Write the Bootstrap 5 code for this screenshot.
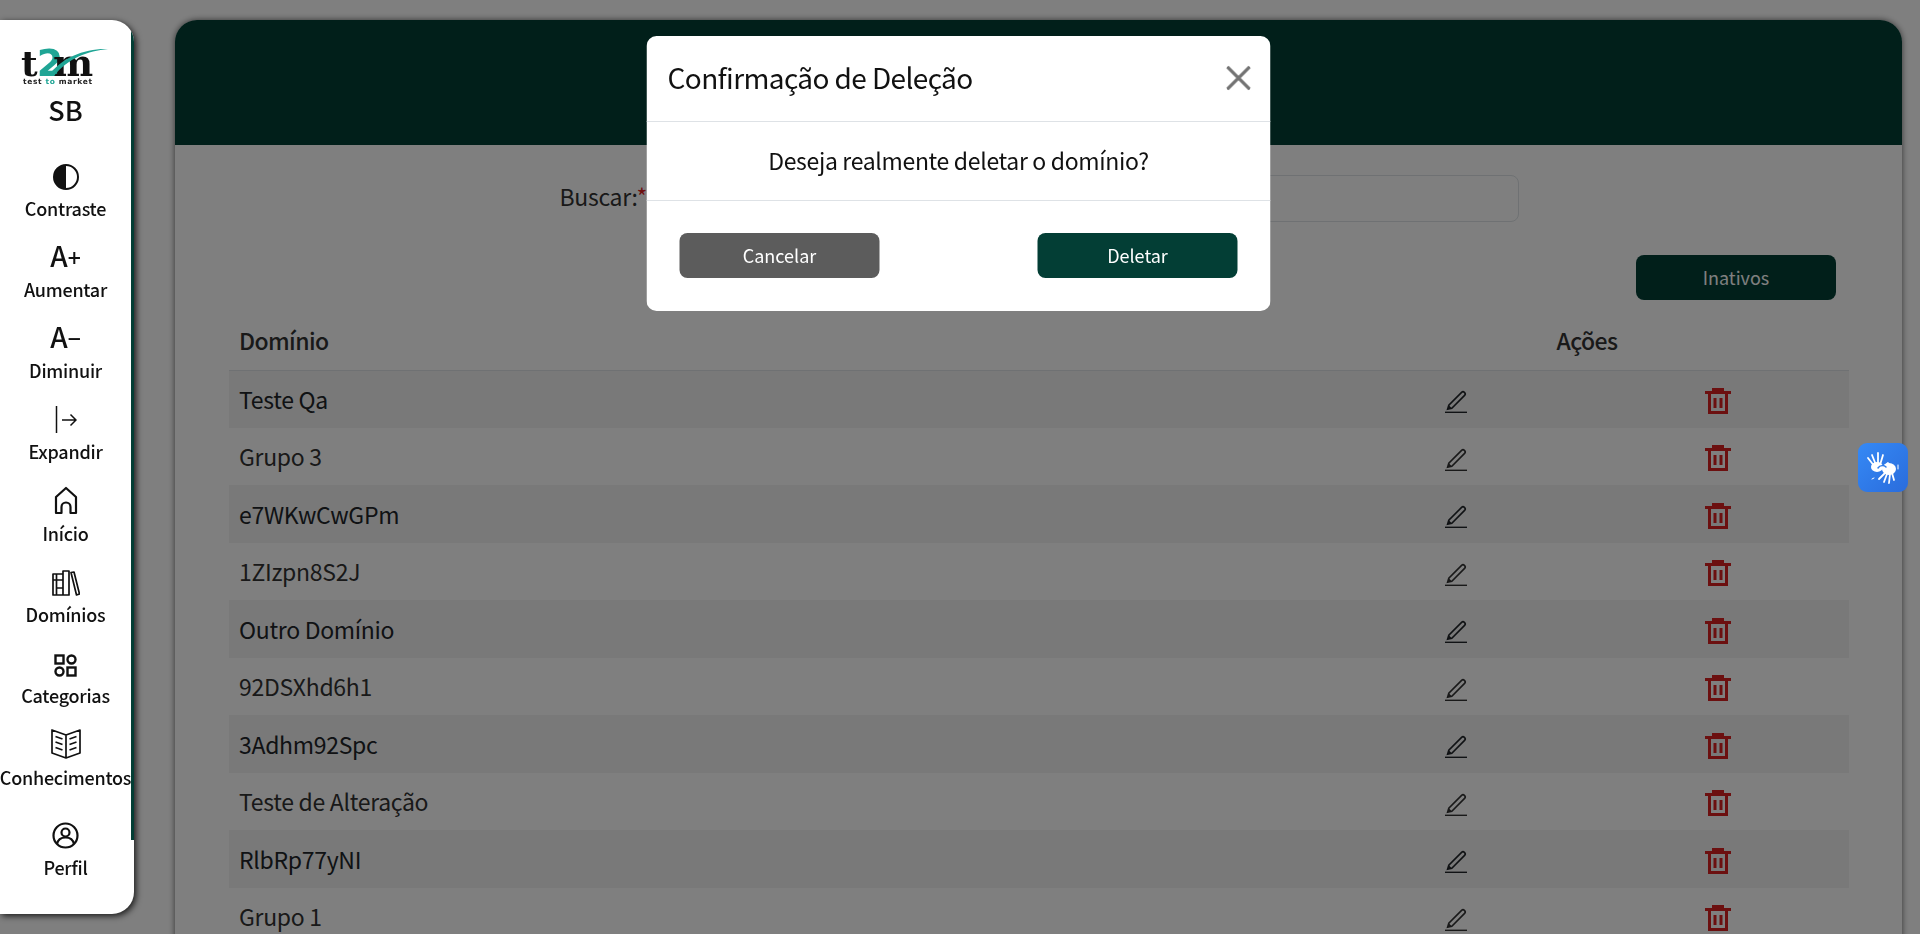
<!DOCTYPE html>
<html lang="pt-BR">

<head>
    <meta charset="UTF-8">
    <meta name="viewport" content="width=device-width, initial-scale=1.0">
    <title>Domínios</title>
    <link href="https://cdn.jsdelivr.net/npm/bootstrap@5.3.0/dist/css/bootstrap.min.css" rel="stylesheet">
    <style>
        html, body {
            height: 100%;
            overflow: hidden;
        }
        body {
            font-family: "Noto Sans CJK SC", "Noto Sans", sans-serif;
            color: #333;
            background: #fff;
            padding: 20px 18px 0 0;
        }
        /* sidebar stays above the backdrop */
        .side-bar {
            width: 134px;
            height: 894px;
            background: #fff;
            border-radius: 0 22px 22px 0;
            box-shadow: 2px 2px 6px rgba(0, 0, 0, .8);
            overflow: hidden;
            z-index: 1052;
            flex: none;
        }
        .side-inner {
            height: 820px;
            border-right: 3px solid #033e35;
            padding-top: 26px;
        }
        .side-logo {
            display: block;
            margin-left: 18px;
            overflow: visible;
        }
        .side-user {
            font-size: 27px;
            line-height: 34px;
            font-weight: 500;
            color: #111;
            margin-top: 7px;
            margin-bottom: 21.5px;
        }
        .side-item {
            height: 81.3px;
            color: #111;
            font-size: 18px;
            font-weight: 500;
            letter-spacing: -.25px;
            line-height: 24px;
            text-decoration: none;
            white-space: nowrap;
        }
        .side-ico {
            height: 47px;
            padding-bottom: 6px;
        }
        .side-perfil {
            margin-top: 9px;
        }
        .side-more {
            margin-top: 11px;
        }
        .font-ico {
            font-size: 28px;
            line-height: 1;
            font-weight: 500;
            letter-spacing: 0;
            padding-bottom: 8px;
        }
        .font-ico sup {
            font-size: 23px;
            top: -.52em;
            margin-left: 0;
        }
        .main-panel {
            margin-left: 41px;
            height: 1100px;
            border-radius: 22px 22px 0 0;
            box-shadow: 0 0 6px rgba(0, 0, 0, .6);
        }
        .panel-head {
            height: 125px;
            background: #033e35;
            border-radius: 22px 22px 0 0;
        }
        .panel-body-in {
            padding: 30px 53px 0 54px;
        }
        .search-label {
            font-size: 23px;
            letter-spacing: -.3px;
            line-height: 43px;
            width: 88px;
            white-space: nowrap;
            color: #333;
        }
        .search-label span {
            color: #dc2020;
        }
        .search-input {
            width: 871px;
            height: 47px;
            border-radius: 8px;
        }
        .btn-inativos {
            width: 200px;
            height: 45px;
            margin: 33px 13px 0 0;
            padding: 0;
            font-size: 18px;
            border-radius: 8px;
            border: 0;
            color: #fff;
            background: #033e35;
        }
        .dom-table {
            margin-top: 15px;
            table-layout: fixed;
            color: #333;
            font-size: 23px;
            letter-spacing: -.3px;
        }
        .dom-table > :not(caption) > * > * {
            padding: 0 10px;
            vertical-align: middle;
            height: 57.5px;
            border-bottom-width: 0;
            line-height: 30px;
        }
        .dom-table thead th {
            height: 55px;
            padding-bottom: 5px;
            font-weight: 500;
            letter-spacing: -.6px;
            border-bottom: 1px solid #dee2e6;
        }
        .dom-table svg {
            margin-top: -3px;
        }
        .col-act {
            width: 262px;
        }
        .ico-trash svg {
            color: #d82020;
        }
        .modal-dialog.del-dialog {
            max-width: 624px;
            margin: 36px auto 0;
            transform: translateX(-1.5px);
        }
        .del-dialog .modal-content {
            border: 0;
            border-radius: 10px;
        }
        .del-dialog .modal-header {
            height: 85.5px;
            padding: 0 19px 0 21px;
        }
        .del-dialog .modal-title {
            font-size: 28px;
            letter-spacing: -.6px;
            line-height: 40px;
            font-weight: 400;
            color: #111;
            margin-top: -2px;
        }
        .del-dialog .btn-close {
            width: 26px;
            height: 26px;
            padding: 0;
            margin: 0;
            background-size: 26px;
            opacity: .55;
        }
        .del-dialog .modal-body {
            height: 78.5px;
            padding: 0;
            font-size: 23px;
            letter-spacing: -.33px;
            line-height: 77px;
            color: #111;
        }
        .del-dialog .modal-footer {
            height: 111px;
            padding: 32px 33px;
            justify-content: space-between;
            align-items: flex-start;
        }
        .btn-del {
            width: 200px;
            height: 45px;
            margin: 0;
            padding: 0;
            font-size: 18px;
            border-radius: 8px;
            border: 0;
            color: #fff;
        }
        .btn-cancel-gray {
            background: #5c5c5c;
        }
        .btn-confirm-green {
            background: #033e35;
        }
        .libras-btn {
            position: fixed;
            top: 443px;
            right: 12px;
            width: 50px;
            height: 49px;
            border-radius: 9px;
            background: linear-gradient(135deg, #3589f5, #2a6cdc);
            z-index: 1060;
        }
    </style>
</head>

<body class="d-flex">
    <svg width="0" height="0" class="position-absolute">
        <symbol id="icoPencil" viewBox="0 0 24 24">
            <path d="M3.6 20.2l1.2-4L17.6 3.4a2 2 0 0 1 2.8 0l.2.2a2 2 0 0 1 0 2.8L7.8 19.2z" fill="none" stroke="currentColor" stroke-width="1.600"/>
            <path d="M3.6 20.2l1.2-4 3 3z" fill="currentColor"/>
            <path d="M1 23.4h22" stroke="currentColor" stroke-width="1.600"/>
        </symbol>
        <symbol id="icoTrash" viewBox="0 0 26 26">
            <path d="M7 0h12v3h7v3H0V3h7z" fill="currentColor"/>
            <path d="M4.5 5v19.500h17V5" fill="none" stroke="currentColor" stroke-width="3"/>
            <path d="M10 10v10M16 10v10" stroke="currentColor" stroke-width="3"/>
        </symbol>
    </svg>

    <aside class="side-bar">
        <div class="side-inner text-center">
            <svg class="side-logo" width="92" height="40" viewBox="0 0 92 40">
                <text x="3" y="30" font-weight="700" fill="#111"><tspan font-family="DejaVu Serif" font-size="36">t</tspan><tspan dx="-1" font-family="DejaVu Sans" font-size="38" fill="#1fa595">2</tspan><tspan dx="-10" font-family="DejaVu Serif" font-size="38">m</tspan></text>
                <path d="M90 3C70 5 50 12 36 30h-6C44 11 68 2 90 3z" fill="#1fa595"/>
                <text x="5" y="38" font-family="DejaVu Sans" font-weight="700" font-size="7.500" fill="#222" textLength="69">test <tspan fill="#1fa595">to</tspan> market</text>
            </svg>
            <div class="side-user">SB</div>

            <a href="#" class="side-item d-flex flex-column align-items-center">
                <div class="side-ico d-flex align-items-end justify-content-center">
                    <svg width="26" height="26" viewBox="0 0 26 26"><circle cx="13" cy="13" r="12" fill="none" stroke="#111" stroke-width="2"/><path d="M13 1a12 12 0 0 0 0 24z" fill="#111"/></svg>
                </div>
                <span>Contraste</span>
            </a>
            <a href="#" class="side-item d-flex flex-column align-items-center">
                <div class="side-ico font-ico d-flex align-items-end justify-content-center">A<sup>+</sup></div>
                <span>Aumentar</span>
            </a>
            <a href="#" class="side-item d-flex flex-column align-items-center">
                <div class="side-ico font-ico d-flex align-items-end justify-content-center">A<sup>−</sup></div>
                <span>Diminuir</span>
            </a>
            <a href="#" class="side-item d-flex flex-column align-items-center">
                <div class="side-ico d-flex align-items-end justify-content-center">
                    <svg width="22" height="27" viewBox="0 0 22 27" fill="none" stroke="#111" stroke-width="1.500"><path d="M1.500 0v27M7 14h14M15.500 8.500L21 14l-5.500 5.500"/></svg>
                </div>
                <span>Expandir</span>
            </a>
            <a href="#" class="side-item d-flex flex-column align-items-center">
                <div class="side-ico d-flex align-items-end justify-content-center">
                    <svg width="24" height="29" viewBox="0 0 24 29" fill="none" stroke="#111" stroke-width="2.200" stroke-linejoin="round"><path d="M2 27V11L12 2l10 9v16h-5.500v-6a4.500 4.500 0 0 0-9 0v6z"/></svg>
                </div>
                <span>Início</span>
            </a>
            <a href="#" class="side-item d-flex flex-column align-items-center">
                <div class="side-ico d-flex align-items-end justify-content-center">
                    <svg width="28" height="27" viewBox="0 0 28 27" fill="none" stroke="#111" stroke-width="1.700" stroke-linejoin="round"><path d="M1 5h10v21H1zM4.500 5v21M1 11h10M4.500 19H11M11 2h6v24h-6zM19 3.500l3-.5 5.500 22-3 1z"/></svg>
                </div>
                <span>Domínios</span>
            </a>
            <a href="#" class="side-item d-flex flex-column align-items-center">
                <div class="side-ico d-flex align-items-end justify-content-center">
                    <svg width="23" height="23" viewBox="0 0 23 23" fill="none" stroke="#111" stroke-width="2.400"><rect x="1.500" y="1.500" width="8" height="8"/><circle cx="17.500" cy="5.500" r="4"/><circle cx="5.500" cy="17.500" r="4"/><rect x="13.500" y="13.500" width="8" height="8"/></svg>
                </div>
                <span>Categorias</span>
            </a>
            <a href="#" class="side-item d-flex flex-column align-items-center">
                <div class="side-ico d-flex align-items-end justify-content-center">
                    <svg width="30" height="30" viewBox="0 0 30 30" fill="none" stroke="#111" stroke-width="1.700" stroke-linejoin="round"><path d="M15 6L1 1v23l14 5 14-5V1zM15 6v23M4.500 7.500l7 2.500M4.500 13l7 2.500M4.500 18.500l7 2.500M25.500 7.500l-7 2.500M25.500 13l-7 2.500M25.500 18.500l-7 2.500"/></svg>
                </div>
                <span>Conhecimentos</span>
            </a>
            <a href="#" class="side-item side-perfil d-flex flex-column align-items-center">
                <div class="side-ico d-flex align-items-end justify-content-center">
                    <svg width="27" height="27" viewBox="0 0 27 27" fill="none" stroke="#111" stroke-width="2.200"><circle cx="13.500" cy="13.500" r="12"/><circle cx="13.500" cy="10.500" r="4"/><path d="M5 22c1-5 4-6.500 8.500-6.500S21 17 22 22"/></svg>
                </div>
                <span>Perfil</span>
            </a>
            <a href="#" class="side-item side-more d-flex flex-column align-items-center">
                <div class="side-ico d-flex align-items-end justify-content-center">
                    <svg width="22" height="27" viewBox="0 0 22 27" fill="none" stroke="#111" stroke-width="2"><path d="M1 1h20v25H1z"/></svg>
                </div>
            </a>
        </div>
    </aside>

    <main class="main-panel flex-grow-1">
        <div class="panel-head"></div>
        <div class="panel-body-in">
            <div class="d-flex justify-content-center">
                <label for="busca" class="search-label">Buscar:<span>*</span></label>
                <input id="busca" type="text" class="form-control search-input">
            </div>
            <div class="d-flex justify-content-end">
                <button class="btn btn-inativos">Inativos</button>
            </div>
            <table class="table table-striped dom-table mb-0">
                <colgroup>
                    <col>
                    <col class="col-act">
                    <col class="col-act">
                </colgroup>
                <thead>
                    <tr>
                        <th>Domínio</th>
                        <th colspan="2" class="text-center">Ações</th>
                    </tr>
                </thead>
                <tbody id="domList"></tbody>
            </table>
        </div>
    </main>

    <div class="libras-btn d-flex align-items-center justify-content-center">
        <svg width="50" height="49" viewBox="0 0 50 49" fill="none" stroke="#fff" stroke-linecap="round">
            <g stroke-width="1.800">
                <path d="M17 24L10 15M18 22L14 12M20 21V10M22 22l3-10M24 25l6-5"/>
            </g>
            <ellipse cx="19" cy="24" rx="6" ry="5" fill="#fff" stroke="none"/>
            <g stroke-width="1.800">
                <path d="M27 30l-6 6M29 31l-3 8M32 31l-1 9M34 30l2 7"/>
            </g>
            <ellipse cx="31" cy="26" rx="7" ry="6" fill="#fff" stroke="none"/>
            <path d="M20 25c2-3 6-3 8-1" stroke="#2f7ce8" stroke-width="1.500"/>
            <path d="M40 22v4M16 35l-2 1" stroke-width="1"/>
        </svg>
    </div>

    <!-- delete confirmation -->
    <div class="modal-backdrop show"></div>
    <div class="modal d-block" tabindex="-1">
        <div class="modal-dialog del-dialog">
            <div class="modal-content">
                <div class="modal-header">
                    <h5 class="modal-title">Confirmação de Deleção</h5>
                    <button type="button" class="btn-close" aria-label="Close"></button>
                </div>
                <div class="modal-body text-center">Deseja realmente deletar o domínio?</div>
                <div class="modal-footer">
                    <button class="btn btn-del btn-cancel-gray">Cancelar</button>
                    <button class="btn btn-del btn-confirm-green">Deletar</button>
                </div>
            </div>
        </div>
    </div>

    <script src="https://cdn.jsdelivr.net/npm/bootstrap@5.3.0/dist/js/bootstrap.bundle.min.js"></script>
    <script>
        const dominios = ['Teste Qa', 'Grupo 3', 'e7WKwCwGPm', '1ZIzpn8S2J', 'Outro Domínio', '92DSXhd6h1',
            '3Adhm92Spc', 'Teste de Alteração', 'RlbRp77yNI', 'Grupo 1'];

        const domList = document.getElementById('domList');
        dominios.forEach(nome => {
            const row = document.createElement('tr');
            row.innerHTML = `
                <td>${nome}</td>
                <td class="text-center"><svg width="24" height="24"><use href="#icoPencil"></use></svg></td>
                <td class="text-center ico-trash"><svg width="26" height="26"><use href="#icoTrash"></use></svg></td>
            `;
            domList.appendChild(row);
        });
    </script>
</body>

</html>
